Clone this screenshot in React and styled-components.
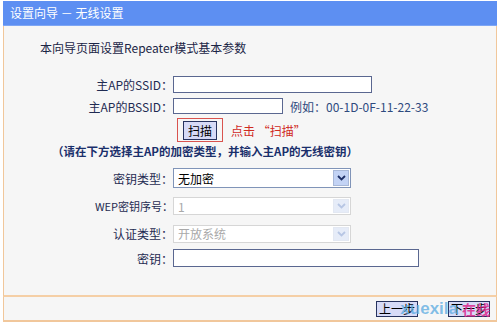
import styled, { createGlobalStyle } from "styled-components";

const GlobalStyle = createGlobalStyle`
  html, body {
    margin: 0;
    padding: 0;
    background: #ffffff;
  }
  body {
    font-family: "Noto Sans CJK SC", "Liberation Sans", sans-serif;
    font-size: 12px;
    color: #1f2b52;
  }
`;

const Field = ({ label, height, small, children }) => {
  return (
    <Row $height={height}>
      <Label $small={small}>{label}</Label>
      {children}
    </Row>
  );
};

const Select = ({ value, disabled, width, height }) => {
  return (
    <SelectBox $disabled={disabled} $width={width} $height={height}>
      <SelectValue $disabled={disabled}>{value}</SelectValue>
      <Arrow $disabled={disabled}>
        <svg width="9" height="6" viewBox="0 0 9 6">
          <path
            d="M1 1 L4.5 4.5 L8 1"
            fill="none"
            stroke={disabled ? "#b7c6e4" : "#1d2f66"}
            strokeWidth="1.8"
          />
        </svg>
      </Arrow>
    </SelectBox>
  );
};

export default function App() {
  return (
    <>
      <GlobalStyle />
      <Page>
        <Frame>
          <Header>设置向导 － 无线设置</Header>
          <Body>
            <Intro>本向导页面设置Repeater模式基本参数</Intro>
            <Form>
              <Field label="主AP的SSID：" height={22}>
                <TextInput $width={199} $height={17} />
              </Field>
              <Field label="主AP的BSSID：" height={22}>
                <TextInput $width={110} $height={16} />
                <Hint>例如：00-1D-0F-11-22-33</Hint>
              </Field>
              <Field label="" height={26}>
                <ScanFrame>
                  <Button>扫描</Button>
                </ScanFrame>
                <RedNote>点击 “扫描”</RedNote>
              </Field>
              <Note>（请在下方选择主AP的加密类型，并输入主AP的无线密钥）</Note>
              <Spacer />
              <Field label="密钥类型：" height={28}>
                <Select value="无加密" width={178} height={20} />
              </Field>
              <Field label="WEP密钥序号：" height={28} small>
                <Select value="1" width={178} height={18} disabled />
              </Field>
              <Field label="认证类型：" height={27}>
                <Select value="开放系统" width={178} height={18} disabled />
              </Field>
              <Field label="密钥：" height={22}>
                <TextInput $width={246} $height={18} />
              </Field>
            </Form>
          </Body>
          <Footer>
            <Button>上一步</Button>
            <Button>下一步</Button>
            <Watermark>
              xuexila<Badge>在线</Badge>
            </Watermark>
          </Footer>
        </Frame>
      </Page>
    </>
  );
}

// styled-components

const Page = styled.div`
  width: 500px;
  height: 325px;
  padding: 1px 3px 0 3px;
  box-sizing: border-box;
  overflow: hidden;
`;

const Frame = styled.div`
  width: 494px;
  display: flex;
  flex-direction: column;
`;

const Header = styled.div`
  height: 24px;
  background: #5d8ff2;
  border-bottom: 1px solid #7ea6f4;
  color: #ffffff;
  font-size: 12px;
  line-height: 24px;
  padding-left: 7px;
`;

const Body = styled.div`
  height: 271px;
  background: #f6f6f6;
  border-left: 1px solid #f1c79b;
  border-right: 1px solid #f1c79b;
  border-bottom: 2px solid #f5cfa6;
  box-sizing: border-box;
  padding-top: 14px;
`;

const Intro = styled.div`
  height: 16px;
  line-height: 16px;
  padding-left: 36px;
  color: #1b2546;
`;

const Form = styled.div`
  display: flex;
  flex-direction: column;
  margin-top: 17px;
`;

const Row = styled.div`
  display: flex;
  align-items: center;
  height: ${(p) => p.$height}px;
`;

const Label = styled.div`
  width: 169px;
  flex: none;
  text-align: right;
  color: #1f2b52;
  font-size: ${(p) => (p.$small ? "11px" : "12px")};
`;

const TextInput = styled.div`
  width: ${(p) => p.$width}px;
  height: ${(p) => p.$height}px;
  box-sizing: border-box;
  background: #ffffff;
  border: 1px solid #5a6790;
`;

const Hint = styled.span`
  margin-left: 7px;
  color: #2e4a7e;
  font-size: 12px;
`;

const ScanFrame = styled.div`
  margin-left: 4px;
  width: 46px;
  height: 24px;
  box-sizing: border-box;
  border: 1px solid #d9534f;
  display: flex;
  align-items: center;
  justify-content: center;
`;

const Button = styled.div`
  width: 42px;
  height: 16px;
  box-sizing: border-box;
  background: #d7dbf7;
  border: 1px solid #27335f;
  color: #000000;
  font-size: 12px;
  line-height: 14px;
  text-align: center;
  ${ScanFrame} & {
    width: 34px;
    height: 19px;
    line-height: 17px;
  }
`;

const RedNote = styled.span`
  margin-left: 8px;
  color: #d02a1f;
`;

const Note = styled.div`
  height: 16px;
  line-height: 16px;
  padding-left: 48px;
  color: #1a2f6b;
  font-weight: bold;
  font-size: 11.5px;
`;

const Spacer = styled.div`
  height: 5px;
`;

const SelectBox = styled.div`
  width: ${(p) => p.$width}px;
  height: ${(p) => p.$height}px;
  box-sizing: border-box;
  background: #ffffff;
  border: 1px solid ${(p) => (p.$disabled ? "#d6d6d6" : "#8094b8")};
  display: flex;
  align-items: stretch;
`;

const SelectValue = styled.div`
  flex: 1;
  padding-left: 4px;
  display: flex;
  align-items: center;
  color: ${(p) => (p.$disabled ? "#a9a9a9" : "#000000")};
`;

const Arrow = styled.div`
  width: 16px;
  margin: 1px;
  background: ${(p) => (p.$disabled ? "#e6ecf8" : "#c3d3f5")};
  border: 1px solid ${(p) => (p.$disabled ? "#e3e8f2" : "#a8b8d8")};
  box-sizing: border-box;
  display: flex;
  align-items: center;
  justify-content: center;
`;

const Footer = styled.div`
  position: relative;
  height: 25px;
  background: #f6f6f6;
  border-left: 1px solid #f1c79b;
  border-right: 1px solid #f1c79b;
  border-bottom: 2px solid #f1c79b;
  box-sizing: border-box;
  display: flex;
  align-items: center;
  justify-content: flex-end;
  gap: 30px;
  padding-right: 6px;
`;

const Watermark = styled.div`
  position: absolute;
  right: 4px;
  top: 2px;
  display: flex;
  align-items: center;
  font-family: "Liberation Sans", sans-serif;
  font-weight: bold;
  font-size: 17px;
  color: rgba(90, 170, 225, 0.75);
  pointer-events: none;
`;

const Badge = styled.span`
  margin-left: 2px;
  padding: 0 2px;
  font-family: "Noto Sans CJK SC", sans-serif;
  font-size: 14px;
  color: rgba(220, 40, 140, 0.85);
`;
